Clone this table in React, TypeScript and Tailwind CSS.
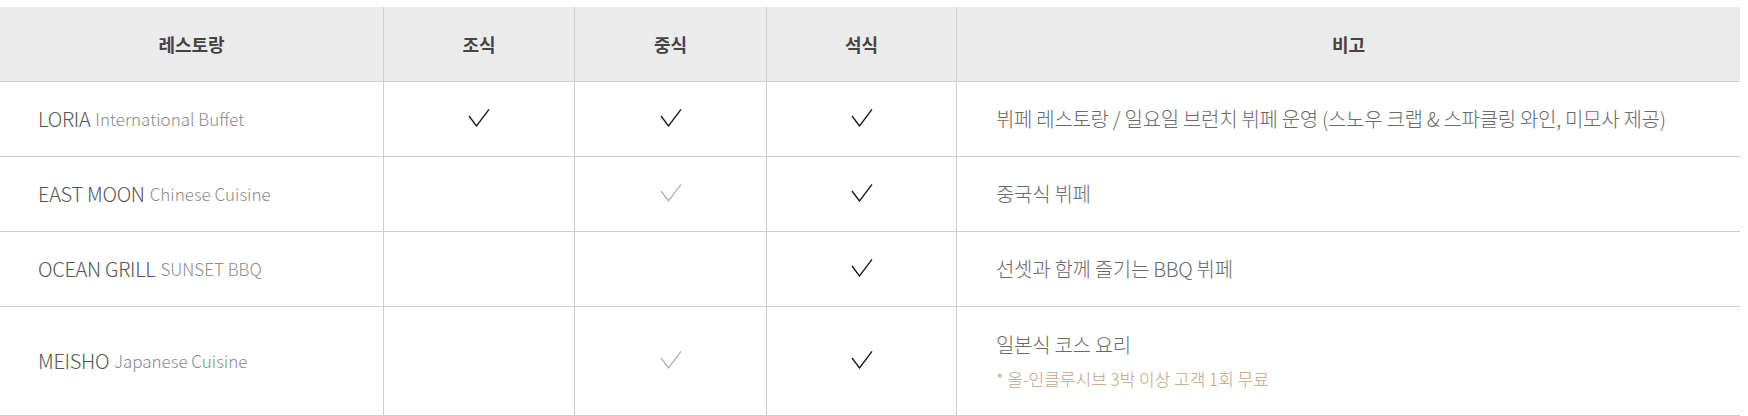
import React from "react";

type Row = {
  name: string;
  sub: string;
  b: 0 | 1 | 2;
  l: 0 | 1 | 2;
  d: 0 | 1 | 2;
  remark: string;
  note?: string;
};

const rows: Row[] = [
  { name: "LORIA", sub: "International Buffet", b: 2, l: 2, d: 2, remark: "뷔페 레스토랑 / 일요일 브런치 뷔페 운영 (스노우 크랩 & 스파클링 와인, 미모사 제공)" },
  { name: "EAST MOON", sub: "Chinese Cuisine", b: 0, l: 1, d: 2, remark: "중국식 뷔페" },
  { name: "OCEAN GRILL", sub: "SUNSET BBQ", b: 0, l: 0, d: 2, remark: "선셋과 함께 즐기는 BBQ 뷔페" },
  { name: "MEISHO", sub: "Japanese Cuisine", b: 0, l: 1, d: 2, remark: "일본식 코스 요리", note: "* 올-인클루시브 3박 이상 고객 1회 무료" },
];

function Check({ level }: { level: 0 | 1 | 2 }) {
  if (level === 0) return null;
  const color = level === 2 ? "#1a1a1a" : "#b5b5b5";
  return (
    <svg width="22" height="19" viewBox="0 0 22 19" className="mb-[4px]">
      <polyline points="1,8 8.5,18 21,1.3" fill="none" stroke={color} strokeWidth="1.35" />
    </svg>
  );
}

const font = { fontFamily: '"Noto Sans CJK KR", "Noto Sans", sans-serif' };

export default function App() {
  return (
    <div className="w-[1748px] h-[416px] bg-white pt-[7px]" style={font}>
      <div className="w-[1740px]">
        <div className="grid grid-cols-[384px_191px_192px_190px_783px] h-[75px] bg-[#ebebeb] border-b border-[#cfcfcf] text-[18px] font-bold text-[#444]">
          <div className="flex items-center justify-center border-r border-[#cfcfcf]">레스토랑</div>
          <div className="flex items-center justify-center border-r border-[#cfcfcf]">조식</div>
          <div className="flex items-center justify-center border-r border-[#cfcfcf]">중식</div>
          <div className="flex items-center justify-center border-r border-[#cfcfcf]">석식</div>
          <div className="flex items-center justify-center">비고</div>
        </div>
        {rows.map((r, i) => (
          <div
            key={i}
            className={`grid grid-cols-[384px_191px_192px_190px_783px] border-b border-[#cfcfcf] ${r.note ? "h-[109px]" : "h-[75px]"}`}
          >
            <div className="flex items-center pl-[38px] border-r border-[#cfcfcf] font-light">
              <span className="text-[20px] text-[#555] tracking-[-0.3px]">{r.name}</span>
              <span className="ml-[5px] text-[17px] text-[#8a8a8a]">{r.sub}</span>
            </div>
            <div className="flex items-center justify-center border-r border-[#cfcfcf]"><Check level={r.b} /></div>
            <div className="flex items-center justify-center border-r border-[#cfcfcf]"><Check level={r.l} /></div>
            <div className="flex items-center justify-center border-r border-[#cfcfcf]"><Check level={r.d} /></div>
            <div className="flex flex-col justify-center pl-[39px] font-light">
              <div className="text-[20px] text-[#6a6a6a] tracking-[-0.3px] leading-[26px]">{r.remark}</div>
              {r.note && (
                <div className="mt-[10px] text-[17px] text-[#c4a17a] leading-[22px]">{r.note}</div>
              )}
            </div>
          </div>
        ))}
      </div>
    </div>
  );
}
